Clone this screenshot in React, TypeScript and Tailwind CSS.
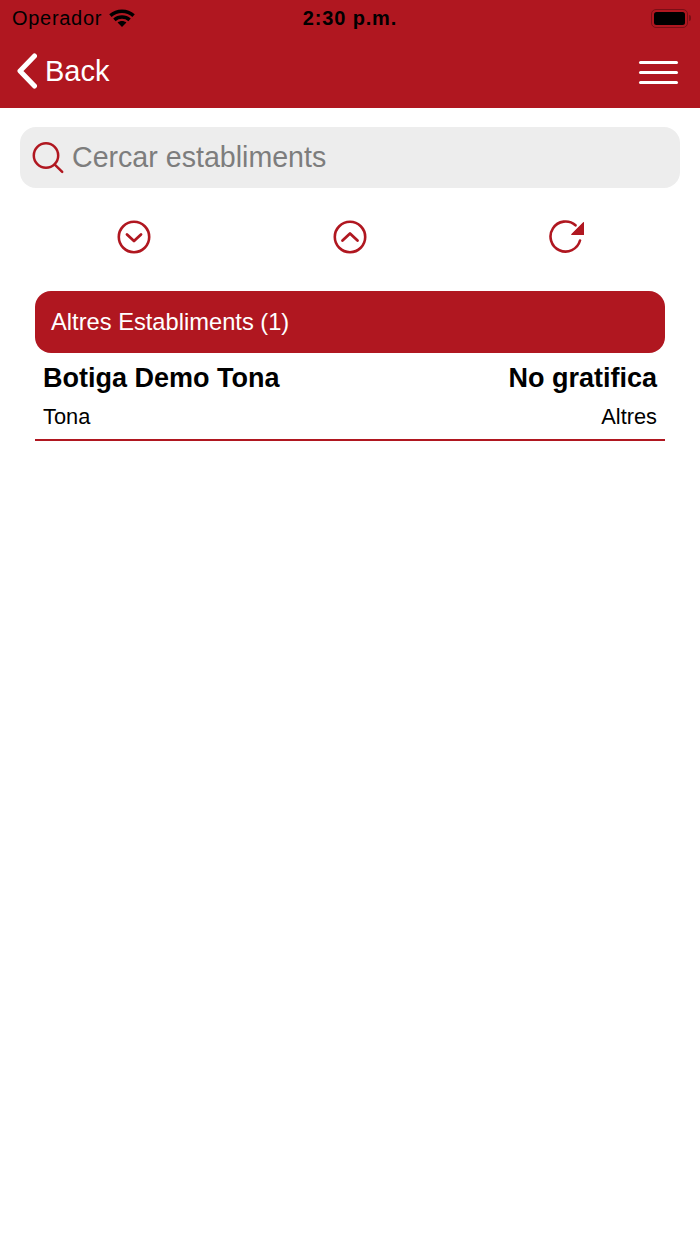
const RED = "#b01720";

function WifiIcon() {
  return (
    <svg width="26" height="18" viewBox="0 0 26 18" fill="none" stroke="#000" strokeWidth="3.6">
      <path d="M1.4 6.6C8 0.8 18 0.8 24.6 6.6" />
      <path d="M5.4 10.8C9.8 7 16.2 7 20.6 10.8" />
      <path d="M13 18L8.6 13.6C11.2 11.6 14.8 11.6 17.4 13.6Z" fill="#000" stroke="none" />
    </svg>
  );
}

function BatteryIcon() {
  return (
    <div className="flex items-center">
      <div className="w-[37px] h-[19px] rounded-[5px] border-[1.5px] border-[#7a0f16] p-[2px]">
        <div className="w-full h-full rounded-[2.5px] bg-black" />
      </div>
      <div className="w-[2px] h-[6px] ml-[1px] rounded-r-full bg-[#7a0f16]" />
    </div>
  );
}

function SearchIcon() {
  return (
    <svg width="32" height="32" viewBox="0 0 32 32" fill="none" stroke={RED} strokeWidth="2.5" strokeLinecap="round">
      <circle cx="14" cy="13.5" r="12.2" />
      <path d="M22.8 22.6L30.2 29.8" />
    </svg>
  );
}

function ChevronCircle({ up }: { up?: boolean }) {
  return (
    <svg width="34" height="34" viewBox="0 0 34 34" fill="none" stroke={RED} strokeWidth="2.6" strokeLinecap="round" strokeLinejoin="round">
      <circle cx="17" cy="17" r="15.2" />
      <path d={up ? "M9.5 20.5L17 13.5L24.5 20.5" : "M10 14.5L17 21L24 14.5"} strokeWidth="2.8" />
    </svg>
  );
}

function RefreshIcon() {
  return (
    <svg width="36" height="34" viewBox="0 0 36 34" fill="none">
      <path d="M32 20.5A15 15 0 1 1 27.5 5.3" stroke={RED} strokeWidth="2.6" strokeLinecap="round" />
      <path d="M35.6 2.6V14.4H23.8Z" fill={RED} stroke={RED} strokeWidth="1.2" strokeLinejoin="round" />
    </svg>
  );
}

export default function App() {
  return (
    <div className="min-h-[1244px] bg-white font-['Liberation_Sans',Arial,sans-serif]">
      <header className="h-[108px] bg-[#b01720] flex flex-col">
        <div className="h-[36px] grid grid-cols-3 items-center pl-[12px] pr-[9px] text-black text-[20px] tracking-[0.7px]">
          <div className="flex items-center gap-[7px]">
            <span>Operador</span>
            <WifiIcon />
          </div>
          <div className="text-center font-bold mr-[3px] tracking-[0.85px]">2:30 p.m.</div>
          <div className="flex justify-end">
            <BatteryIcon />
          </div>
        </div>
        <div className="flex-1 flex items-center justify-between pl-[17px] pr-[22px] pb-[3px]">
          <div className="flex items-center gap-[8px] text-white text-[29px]">
            <svg width="20" height="36" viewBox="0 0 20 36" fill="none" stroke="#fff" strokeWidth="5" strokeLinecap="round" strokeLinejoin="round">
              <path d="M17.5 3L3 18L17.5 33" />
            </svg>
            <span className="pt-[2px]">Back</span>
          </div>
          <div className="w-[39px] flex flex-col gap-[7px] mt-[4px]">
            <div className="h-[3px] rounded-full bg-white" />
            <div className="h-[3px] rounded-full bg-white" />
            <div className="h-[3px] rounded-full bg-white" />
          </div>
        </div>
      </header>

      <div className="mx-[20px] mt-[19px] h-[61px] rounded-[16px] bg-[#ededed] flex items-center pl-[12px] gap-[8px]">
        <SearchIcon />
        <span className="text-[28.6px] text-[#7d7d7d]">Cercar establiments</span>
      </div>

      <div className="mt-[32px] grid grid-cols-3 px-[26px] justify-items-center items-center h-[34px]">
        <ChevronCircle />
        <ChevronCircle up />
        <RefreshIcon />
      </div>

      <section className="mx-[35px] mt-[37px]">
        <div className="h-[62px] rounded-[16px] bg-[#b01720] flex items-center pl-[16px] pt-[2px] text-white text-[23.7px]">
          Altres Establiments (1)
        </div>
        <div className="border-b-2 border-[#b01720] px-[8px] pt-[8px] pb-[9px] text-black">
          <div className="flex justify-between text-[27px] font-bold leading-[34px]">
            <span>Botiga Demo Tona</span>
            <span>No gratifica</span>
          </div>
          <div className="flex justify-between text-[21.8px] leading-[26px] mt-[9px]">
            <span>Tona</span>
            <span>Altres</span>
          </div>
        </div>
      </section>
    </div>
  );
}
